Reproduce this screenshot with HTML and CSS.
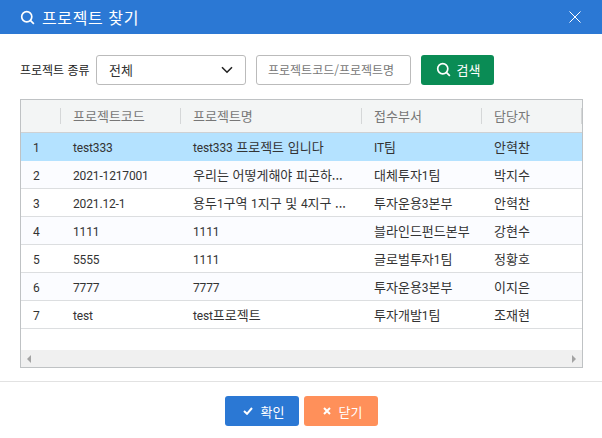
FILE: index.html
```html
<!DOCTYPE html>
<html lang="ko">
<head>
    <meta charset="UTF-8">
    <title>프로젝트 찾기</title>
    <link rel="stylesheet" href="styles.css">
</head>
<body>
    <div class="modal">
        <div class="modal-header">
            <div class="modal-title">
                <svg class="icon-search" width="15" height="15" viewBox="0 0 16 16"><circle cx="7.2" cy="7.2" r="5.4"/><path d="M11 11l3.8 3.8"/></svg>
                <span>프로젝트 찾기</span>
            </div>
            <svg class="icon-close" width="12" height="12" viewBox="0 0 12 12"><path d="M.5.5l11 11M11.5.5l-11 11"/></svg>
        </div>

        <div class="filter">
            <label class="filter-label">프로젝트 종류</label>
            <div class="select">
                <span>전체</span>
                <svg width="12" height="8" viewBox="0 0 12 8"><path d="M1 1.2l5 5 5-5"/></svg>
            </div>
            <input class="keyword" type="text" placeholder="프로젝트코드/프로젝트명">
            <button class="btn btn-search">
                <svg class="icon-search" width="15" height="15" viewBox="0 0 16 16"><circle cx="7.2" cy="7.2" r="5.4"/><path d="M11 11l3.8 3.8"/></svg>
                검색
            </button>
        </div>

        <div class="grid">
            <table>
                <colgroup>
                    <col class="col-no"><col class="col-code"><col class="col-name"><col class="col-dept"><col class="col-owner">
                </colgroup>
                <thead>
                    <tr><th></th><th>프로젝트코드</th><th>프로젝트명</th><th>접수부서</th><th>담당자</th></tr>
                </thead>
                <tbody>
                    <tr class="selected"><td><span class="en">1</span></td><td><span class="en">test333</span></td><td><span class="en">test333</span> 프로젝트 입니다</td><td><span class="en">IT</span>팀</td><td>안혁찬</td></tr>
                    <tr><td><span class="en">2</span></td><td><span class="en">2021-1217001</span></td><td>우리는 어떻게해야 피곤하...</td><td>대체투자<span class="en">1</span>팀</td><td>박지수</td></tr>
                    <tr><td><span class="en">3</span></td><td><span class="en">2021.12-1</span></td><td>용두<span class="en">1</span>구역 <span class="en">1</span>지구 및 <span class="en">4</span>지구 ...</td><td>투자운용<span class="en">3</span>본부</td><td>안혁찬</td></tr>
                    <tr><td><span class="en">4</span></td><td><span class="en">1111</span></td><td><span class="en">1111</span></td><td>블라인드펀드본부</td><td>강현수</td></tr>
                    <tr><td><span class="en">5</span></td><td><span class="en">5555</span></td><td><span class="en">1111</span></td><td>글로벌투자<span class="en">1</span>팀</td><td>정황호</td></tr>
                    <tr><td><span class="en">6</span></td><td><span class="en">7777</span></td><td><span class="en">7777</span></td><td>투자운용<span class="en">3</span>본부</td><td>이지은</td></tr>
                    <tr><td><span class="en">7</span></td><td><span class="en">test</span></td><td><span class="en">test</span>프로젝트</td><td>투자개발<span class="en">1</span>팀</td><td>조재현</td></tr>
                </tbody>
            </table>
            <div class="scrollbar">
                <i class="arrow-left"></i>
                <i class="arrow-right"></i>
            </div>
        </div>

        <div class="modal-footer">
            <button class="btn btn-ok">
                <svg width="10" height="8" viewBox="0 0 10 8"><path d="M1 4l3 2.8L9 1"/></svg>
                확인
            </button>
            <button class="btn btn-close">
                <svg width="8" height="8" viewBox="0 0 8 8"><path d="M1 1l6 6M7 1L1 7"/></svg>
                닫기
            </button>
        </div>
    </div>
</body>
</html>
```

FILE: styles.css
```css
* {
    box-sizing: border-box;
}
body {
    margin: 0;
    background-color: #fff;
    color: #333;
    font-family: "Noto Sans CJK KR", sans-serif;
    font-size: 13px;
}
svg {
    fill: none;
    stroke: currentColor;
}
.en {
    font-family: Roboto, sans-serif;
    font-size: 12px;
    letter-spacing: -0.15px;
}
.modal {
    width: 602px;
    height: 438px;
    display: flex;
    flex-direction: column;
}
.modal-header {
    height: 34px;
    flex-shrink: 0;
    background-color: #2b78d4;
    color: #fff;
    padding: 0 21px 0 20px;
    display: flex;
    align-items: center;
    justify-content: space-between;
}
.modal-title {
    display: flex;
    align-items: center;
    gap: 7px;
    font-size: 16px;
    letter-spacing: 0.6px;
}
.icon-search {
    stroke-width: 1.8;
}
.icon-close {
    stroke-width: 1;
}
.filter {
    display: flex;
    align-items: center;
    margin: 20px 20px 0;
    height: 31px;
}
.filter-label {
    width: 76px;
    font-size: 12px;
    color: #222;
}
.select {
    width: 150px;
    height: 30px;
    border: 1px solid #bbb;
    border-radius: 3px;
    padding: 0 12px;
    display: flex;
    align-items: center;
    justify-content: space-between;
}
.select svg {
    stroke: #222;
    stroke-width: 1.6;
}
.keyword {
    width: 155px;
    height: 30px;
    margin-left: 10px;
    border: 1px solid #bbb;
    border-radius: 3px;
    padding: 0 11px;
    font-family: inherit;
    font-size: 12px;
}
.keyword::placeholder {
    color: #777;
}
.btn {
    height: 30px;
    width: 74px;
    border: none;
    border-radius: 3px;
    color: #fff;
    font-family: inherit;
    font-size: 13px;
    display: flex;
    align-items: center;
    justify-content: center;
    gap: 8px;
    padding: 0 0 0 4px;
}
.btn-search {
    margin-left: 10px;
    width: 73px;
    gap: 6px;
    padding: 0 0 0 1px;
    background-color: #0a8c55;
}
.grid {
    margin: 14px 19px 0 20px;
    height: 269px;
    border: 1px solid #bfc2c4;
    display: flex;
    flex-direction: column;
    justify-content: space-between;
}
table {
    width: 561px;
    border-collapse: separate;
    border-spacing: 0;
    table-layout: fixed;
}
.col-no { width: 40px; }
.col-code { width: 120px; }
.col-name { width: 181px; }
.col-dept { width: 120px; }
.col-owner { width: 100px; }
th {
    height: 33px;
    padding: 0 0 2px 12px;
    background-color: #f3f5f5;
    border-bottom: 1px solid #cfd1d3;
    color: #777;
    font-weight: 400;
    text-align: left;
    position: relative;
}
th + th::before,
th:last-child::after {
    content: "";
    position: absolute;
    top: 8px;
    height: 16px;
    border-left: 1px solid #d5d7d8;
}
th + th::before {
    left: -1px;
}
th:last-child::after {
    right: 0;
}
td {
    height: 28px;
    padding: 0 0 1px 12px;
    background-color: #fbfcff;
    border-bottom: 1px solid #dcdee0;
    white-space: nowrap;
    overflow: hidden;
}
tr:nth-child(odd) td {
    background-color: #fff;
}
tr.selected td {
    background-color: #b4e2ff;
    border-bottom-color: #b4e2ff;
}
.scrollbar {
    height: 17px;
    background-color: #f0f0f0;
    display: flex;
    align-items: center;
    justify-content: space-between;
    padding: 0 6px;
}
.arrow-left {
    border: 4px solid transparent;
    border-left: none;
    border-right-color: #a3a3a3;
}
.arrow-right {
    border: 4px solid transparent;
    border-right: none;
    border-left-color: #a3a3a3;
}
.modal-footer {
    margin-top: 13px;
    border-top: 1px solid #e2e2e2;
    padding-top: 14px;
    display: flex;
    justify-content: center;
    gap: 5px;
}
.btn-ok {
    background-color: #2b78d4;
}
.btn-close {
    background-color: #ff905a;
}
.btn-ok svg,
.btn-close svg {
    stroke-width: 2;
}
```
